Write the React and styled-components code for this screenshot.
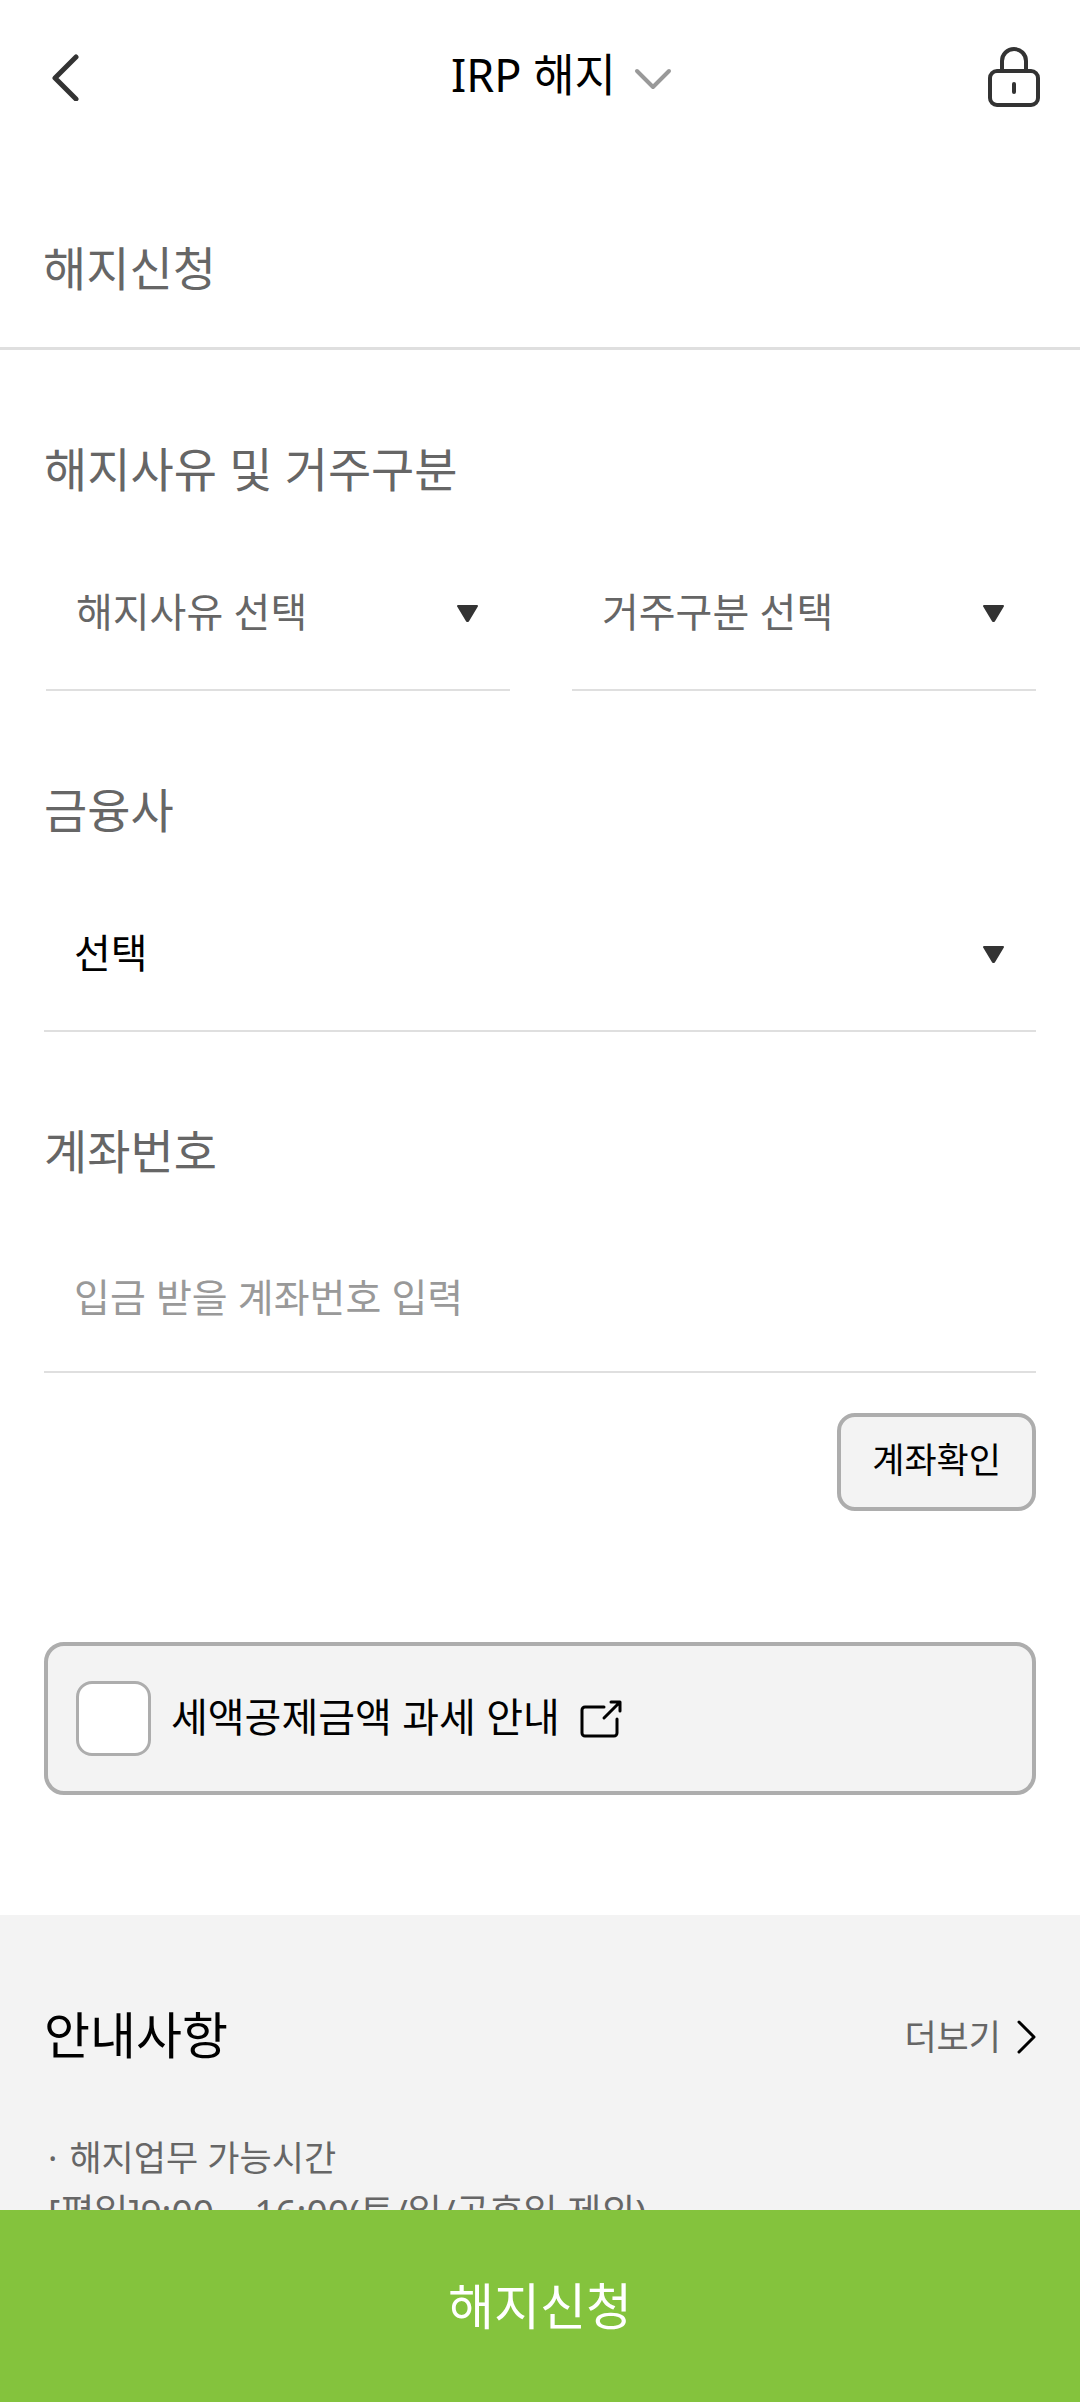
import React, { useState } from "react";
import styled, { createGlobalStyle } from "styled-components";

const GlobalStyle = createGlobalStyle`
  * {
    box-sizing: border-box;
  }

  body {
    margin: 0;
    background: #ffffff;
    color: #000000;
    font-family: "Noto Sans", "Noto Sans CJK KR", sans-serif;
    -webkit-font-smoothing: antialiased;
  }

  button,
  input,
  select {
    margin: 0;
    padding: 0;
    border: 0;
    border-radius: 0;
    background: none;
    color: inherit;
    font: inherit;
  }

  h1,
  h2,
  p,
  ul {
    margin: 0;
    font-weight: 400;
  }
`;

const Screen = styled.div`
  display: flex;
  flex-direction: column;
  height: 100vh;
`;

const Header = styled.header`
  display: grid;
  flex: none;
  grid-template-columns: 124px 1fr 80px;
  align-items: center;
  height: 154px;
  padding: 0 26px 0 25px;
`;

const IconButton = styled.button`
  display: flex;
  align-items: center;
  justify-content: center;
  width: 80px;
  height: 80px;
  cursor: pointer;
`;

const TitleButton = styled.button`
  display: flex;
  align-items: center;
  justify-self: center;
  gap: 18px;
  padding-top: 4px;
  cursor: pointer;
`;

const ScreenTitle = styled.h1`
  padding-bottom: 8px;
  font-size: 45px;
  line-height: 64px;
`;

const Content = styled.main`
  flex: 1;
  min-height: 0;
  overflow-y: auto;
  scrollbar-width: none;
`;

const StepBar = styled.div`
  padding: 82px 43px 47px;
  border-bottom: 3px solid #dfdfdf;
`;

const SectionTitle = styled.h2`
  color: #666666;
  font-size: 47px;
  line-height: 64px;
`;

const Form = styled.form`
  display: flex;
  flex-direction: column;
  gap: 87px;
  padding: 87px 44px 120px;
`;

const Field = styled.div`
  display: flex;
  flex-direction: column;
  gap: 34px;
`;

const FieldRow = styled.div`
  display: grid;
  grid-template-columns: 1fr 1fr;
  gap: 62px;
  padding-left: 2px;
`;

const FieldLabel = styled(SectionTitle).attrs({ as: "label" })`
  display: block;
`;

const SelectBox = styled.div`
  position: relative;
`;

const Select = styled.select`
  display: block;
  width: 100%;
  height: 156px;
  padding: 0 64px 0 30px;
  border-bottom: 2px solid #dfdfdf;
  appearance: none;
  color: ${(p) => (p.$muted ? "#666666" : "#000000")};
  font-size: 40px;
  line-height: 60px;
`;

const SelectArrow = styled.svg`
  position: absolute;
  top: 70px;
  right: 32px;
  pointer-events: none;
`;

const TextInput = styled.input`
  display: block;
  width: 100%;
  height: 156px;
  padding: 4px 30px 0;
  border-bottom: 2px solid #dfdfdf;
  font-size: 39px;

  &::placeholder {
    color: #999999;
    opacity: 1;
  }
`;

const AccountBlock = styled.div`
  display: flex;
  flex-direction: column;
  gap: 40px;
`;

const OutlineButton = styled.button`
  align-self: flex-end;
  padding: 19px 31px 23px;
  border: 4px solid #adadad;
  border-radius: 18px;
  background: #f3f3f3;
  font-size: 35px;
  line-height: 48px;
  cursor: pointer;
`;

const ConsentCard = styled.div`
  display: flex;
  align-items: center;
  gap: 20px;
  margin-top: 44px;
  padding: 35px 28px;
  border: 4px solid #adadad;
  border-radius: 20px;
  background: #f3f3f3;
`;

const Checkbox = styled.input`
  width: 75px;
  height: 75px;
  border: 3px solid #adadad;
  border-radius: 16px;
  background: #ffffff;
  appearance: none;

  &:checked {
    border-color: #84c33d;
    background: #84c33d;
  }
`;

const ConsentLabel = styled.label`
  padding-bottom: 4px;
  font-size: 40px;
  line-height: 60px;
`;

const DetailLink = styled.a`
  display: flex;
  color: #000000;
`;

const Notice = styled.section`
  padding: 84px 44px 80px;
  background: #f3f3f3;
`;

const NoticeHeader = styled.div`
  display: flex;
  align-items: center;
  justify-content: space-between;
  margin-bottom: 60px;
`;

const NoticeTitle = styled.h2`
  font-size: 50px;
  line-height: 72px;
`;

const MoreLink = styled.a`
  display: flex;
  align-items: center;
  gap: 16px;
  padding-top: 4px;
  color: #666666;
  font-size: 35px;
  line-height: 48px;
  text-decoration: none;
`;

const NoticeBody = styled.div`
  padding-left: 4px;
  color: #666666;
  line-height: 54px;
`;

const NoticeItem = styled.p`
  display: flex;
  gap: 12px;
  font-size: 35px;
`;

const NoticeHours = styled.p`
  font-size: 37px;
`;

const SubmitButton = styled.button`
  flex: none;
  height: 192px;
  background: #84c33d;
  color: #ffffff;
  font-size: 50px;
  line-height: 72px;
  cursor: pointer;
`;

function BackIcon() {
  return (
    <svg width="30" height="48" viewBox="0 0 30 48" fill="none" stroke="#333333" strokeWidth="5" strokeLinecap="round" strokeLinejoin="round">
      <path d="M26 4 5 25l21 21" />
    </svg>
  );
}

function ChevronDownIcon() {
  return (
    <svg width="38" height="24" viewBox="0 0 38 24" fill="none" stroke="#999999" strokeWidth="4" strokeLinecap="round" strokeLinejoin="round">
      <path d="m3 4 16 16L35 4" />
    </svg>
  );
}

function LockIcon() {
  return (
    <svg width="52" height="60" viewBox="0 0 52 60" fill="none" stroke="#333333" strokeWidth="4" strokeLinecap="round">
      <rect x="2" y="24" width="48" height="34" rx="7" />
      <path d="M14 24V14a12 12 0 0 1 24 0v10" />
      <path d="M26 37v8" />
    </svg>
  );
}

function ExternalIcon() {
  return (
    <svg width="42" height="38" viewBox="0 0 42 38" fill="none" stroke="#000000" strokeWidth="3" strokeLinecap="round" strokeLinejoin="round">
      <path d="M24 7H5a3 3 0 0 0-3 3v23a3 3 0 0 0 3 3h29a3 3 0 0 0 3-3V19" />
      <path d="M24 18 39 3M31 2h9v9" />
    </svg>
  );
}

function ChevronRightIcon() {
  return (
    <svg width="19" height="34" viewBox="0 0 19 34" fill="none" stroke="#000000" strokeWidth="3" strokeLinecap="round" strokeLinejoin="round">
      <path d="m2 2 15 15L2 32" />
    </svg>
  );
}

function Dropdown({ id, label, placeholder, muted }) {
  return (
    <SelectBox>
      <Select id={id} aria-label={label} defaultValue="" $muted={muted}>
        <option value="">{placeholder}</option>
      </Select>
      <SelectArrow width="21" height="17" viewBox="0 0 21 17" fill="#333333" stroke="#333333" strokeWidth="2" strokeLinejoin="round" aria-hidden="true">
        <path d="M1 1h19l-9 15h-1Z" />
      </SelectArrow>
    </SelectBox>
  );
}

export default function App() {
  const [agreed, setAgreed] = useState(false);
  const [account, setAccount] = useState("");

  return (
    <>
      <GlobalStyle />
      <Screen>
        <Header>
          <IconButton type="button" aria-label="뒤로">
            <BackIcon />
          </IconButton>
          <TitleButton type="button">
            <ScreenTitle as="span">IRP 해지</ScreenTitle>
            <ChevronDownIcon />
          </TitleButton>
          <IconButton type="button" aria-label="잠금">
            <LockIcon />
          </IconButton>
        </Header>

        <Content>
          <StepBar>
            <SectionTitle>해지신청</SectionTitle>
          </StepBar>

          <Form id="termination" onSubmit={(e) => e.preventDefault()}>
            <Field>
              <SectionTitle>해지사유 및 거주구분</SectionTitle>
              <FieldRow>
                <Dropdown id="reason" label="해지사유" placeholder="해지사유 선택" muted />
                <Dropdown id="residence" label="거주구분" placeholder="거주구분 선택" muted />
              </FieldRow>
            </Field>

            <Field>
              <FieldLabel htmlFor="bank">금융사</FieldLabel>
              <Dropdown id="bank" placeholder="선택" />
            </Field>

            <AccountBlock>
              <Field>
                <FieldLabel htmlFor="account">계좌번호</FieldLabel>
                <TextInput
                  id="account"
                  inputMode="numeric"
                  placeholder="입금 받을 계좌번호 입력"
                  value={account}
                  onChange={(e) => setAccount(e.target.value)}
                />
              </Field>
              <OutlineButton type="button">계좌확인</OutlineButton>
            </AccountBlock>

            <ConsentCard>
              <Checkbox id="tax" type="checkbox" checked={agreed} onChange={(e) => setAgreed(e.target.checked)} />
              <ConsentLabel htmlFor="tax">세액공제금액 과세 안내</ConsentLabel>
              <DetailLink href="#tax-guide" aria-label="과세 안내 보기">
                <ExternalIcon />
              </DetailLink>
            </ConsentCard>
          </Form>

          <Notice>
            <NoticeHeader>
              <NoticeTitle>안내사항</NoticeTitle>
              <MoreLink href="#notice">
                더보기
                <ChevronRightIcon />
              </MoreLink>
            </NoticeHeader>
            <NoticeBody>
              <NoticeItem>
                <span>·</span>
                <span>해지업무 가능시간</span>
              </NoticeItem>
              <NoticeHours>[평일]9:00 ~ 16:00(토/일/공휴일 제외)</NoticeHours>
            </NoticeBody>
          </Notice>
        </Content>

        <SubmitButton type="submit" form="termination">
          해지신청
        </SubmitButton>
      </Screen>
    </>
  );
}
